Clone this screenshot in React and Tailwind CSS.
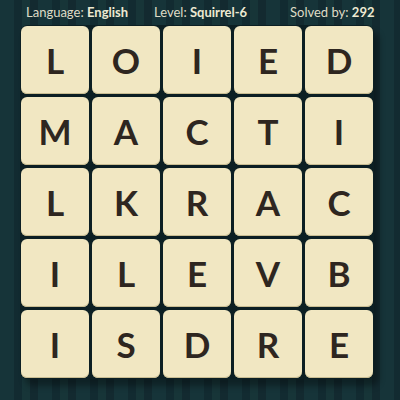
const rows = [
  ['L', 'O', 'I', 'E', 'D'],
  ['M', 'A', 'C', 'T', 'I'],
  ['L', 'K', 'R', 'A', 'C'],
  ['I', 'L', 'E', 'V', 'B'],
  ['I', 'S', 'D', 'R', 'E'],
];

export default function App() {
  return (
    <div
      className="flex h-[400px] w-[400px] flex-col overflow-hidden bg-[#153137] bg-[repeating-linear-gradient(90deg,#163439_0px,#163439_14px,#122b31_14px,#122b31_22px,#173538_22px,#173538_30px,#132a30_30px,#132a30_38px)]"
      style={{ fontFamily: 'Lato, "Open Sans", sans-serif' }}
    >
      {/* Header */}
      <div className="flex h-[24px] items-center pl-[26px] text-[13px] leading-none text-[#dedbc6]">
        <span className="w-[128px] whitespace-nowrap">
          Language: <b className="font-bold text-[#ede9d2]">English</b>
        </span>
        <span className="w-[136px] whitespace-nowrap">
          Level: <b className="font-bold text-[#ede9d2]">Squirrel-6</b>
        </span>
        <span className="whitespace-nowrap">
          Solved by: <b className="font-bold text-[#ede9d2]">292</b>
        </span>
      </div>

      {/* Board */}
      <div className="ml-[20px] mt-[1px] w-fit rounded-[8px] bg-[#0c1f23] p-[1px] shadow-[5px_7px_6px_rgba(0,0,0,0.35)]">
        <div className="grid grid-cols-5 gap-[3px]">
          {rows.flat().map((ch, i) => (
            <div
              key={i}
              className="flex h-[68px] w-[68px] items-center justify-center rounded-[6px] bg-[#f1e7c2] text-[35px] font-bold leading-none text-[#2e2620] shadow-[inset_0_-1px_0_#c9bd92]"
            >
              {ch}
            </div>
          ))}
        </div>
      </div>
    </div>
  );
}
